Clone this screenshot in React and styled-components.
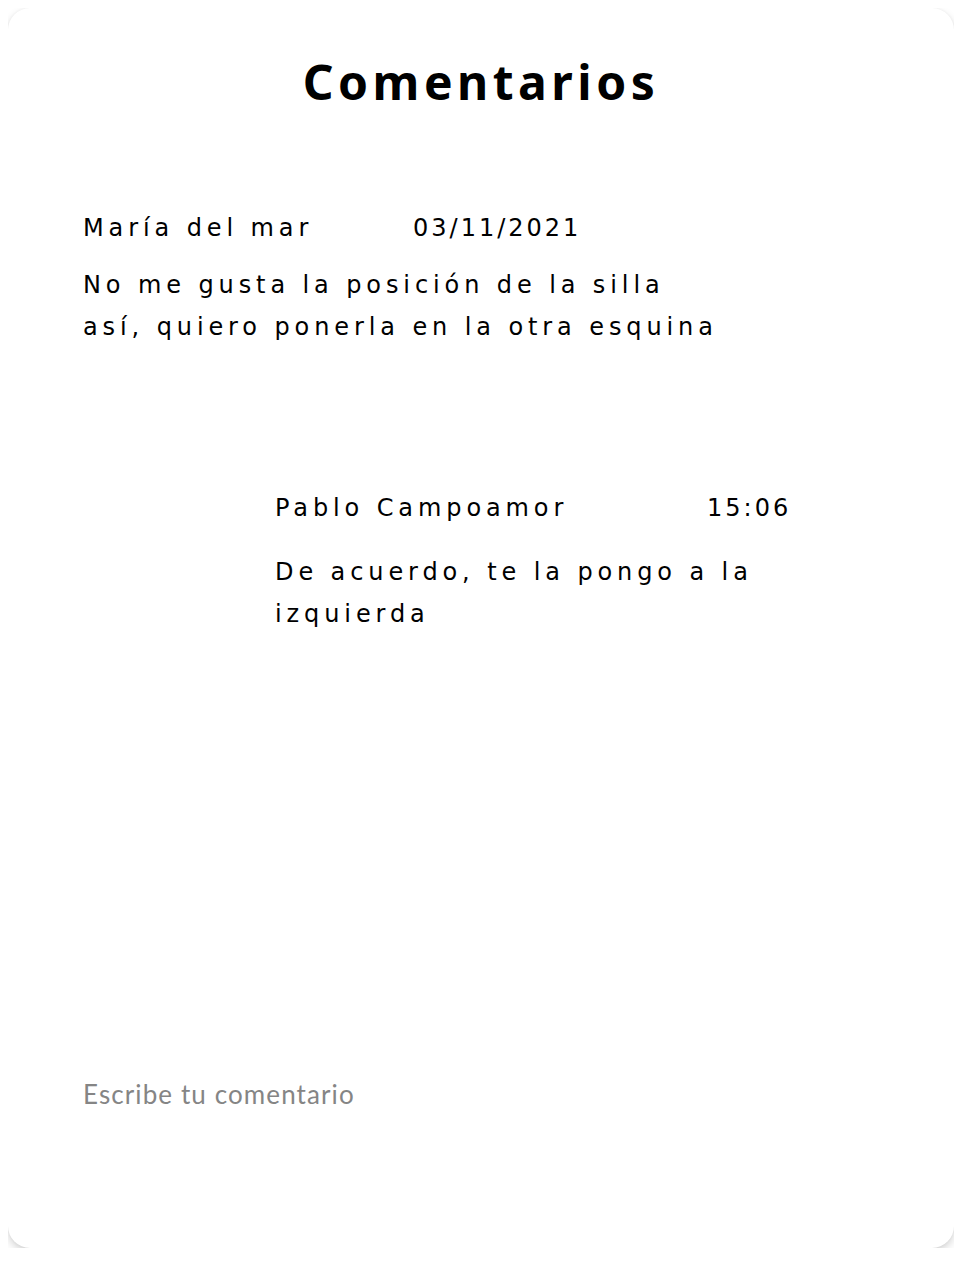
import React from "react";
import styled, { createGlobalStyle } from "styled-components";

const comments = [
  {
    author: "María del mar",
    stamp: "03/11/2021",
    nameWidth: 330,
    indent: 0,
    spacing: 15,
    lines: ["No me gusta la posición de la silla", "así, quiero ponerla en la otra esquina"],
  },
  {
    author: "Pablo Campoamor",
    stamp: "15:06",
    nameWidth: 432,
    indent: 192,
    spacing: 22,
    lines: ["De acuerdo, te la pongo a la", "izquierda"],
  },
];

const App = () => {
  return (
    <>
      <GlobalStyle />
      <Card>
        <Title>Comentarios</Title>
        <CommentList>
          {comments.map((comment, index) => (
            <Comment key={index} $indent={comment.indent} $spacing={comment.spacing}>
              <CommentHeader>
                <Author $width={comment.nameWidth}>{comment.author}</Author>
                <Stamp>{comment.stamp}</Stamp>
              </CommentHeader>
              <CommentBody>
                {comment.lines.map((line, i) => (
                  <React.Fragment key={i}>
                    {line}
                    {i < comment.lines.length - 1 && <br />}
                  </React.Fragment>
                ))}
              </CommentBody>
            </Comment>
          ))}
        </CommentList>
        <CommentInput placeholder="Escribe tu comentario" />
      </Card>
    </>
  );
};

const GlobalStyle = createGlobalStyle`
  body {
    margin: 8px;
    background: #ffffff;
  }
`;

const Card = styled.div`
  display: flex;
  flex-direction: column;
  box-sizing: border-box;
  width: 946px;
  height: 1240px;
  padding: 44px 75px 133px;
  background: #ffffff;
  border-radius: 22px;
  box-shadow: 0 4px 9px rgba(0, 0, 0, 0.17), 0 0 3px rgba(0, 0, 0, 0.05);
`;

const Title = styled.h1`
  margin: 0;
  text-align: center;
  font-family: "Noto Sans", sans-serif;
  font-weight: 700;
  font-size: 48px;
  line-height: 60px;
  letter-spacing: 4.5px;
  color: #000000;
`;

const CommentList = styled.div`
  display: flex;
  flex-direction: column;
  gap: 139px;
  margin-top: 95px;
`;

const Comment = styled.div`
  display: flex;
  flex-direction: column;
  gap: ${(p) => p.$spacing}px;
  margin-left: ${(p) => p.$indent}px;
  font-family: "DejaVu Sans", sans-serif;
  font-size: 24px;
  line-height: 42px;
  letter-spacing: 4.9px;
  color: #000000;
`;

const CommentHeader = styled.div`
  display: flex;
`;

const Author = styled.span`
  width: ${(p) => p.$width}px;
  white-space: nowrap;
`;

const Stamp = styled.span`
  letter-spacing: 3px;
`;

const CommentBody = styled.p`
  margin: 0;
`;

const CommentInput = styled.input`
  margin-top: auto;
  padding: 0;
  border: none;
  outline: none;
  background: transparent;
  font-family: "Lato", sans-serif;
  font-size: 26px;
  line-height: 42px;
  height: 42px;
  letter-spacing: 1.1px;
  color: #333333;

  &::placeholder {
    color: #858585;
  }
`;

export default App;
